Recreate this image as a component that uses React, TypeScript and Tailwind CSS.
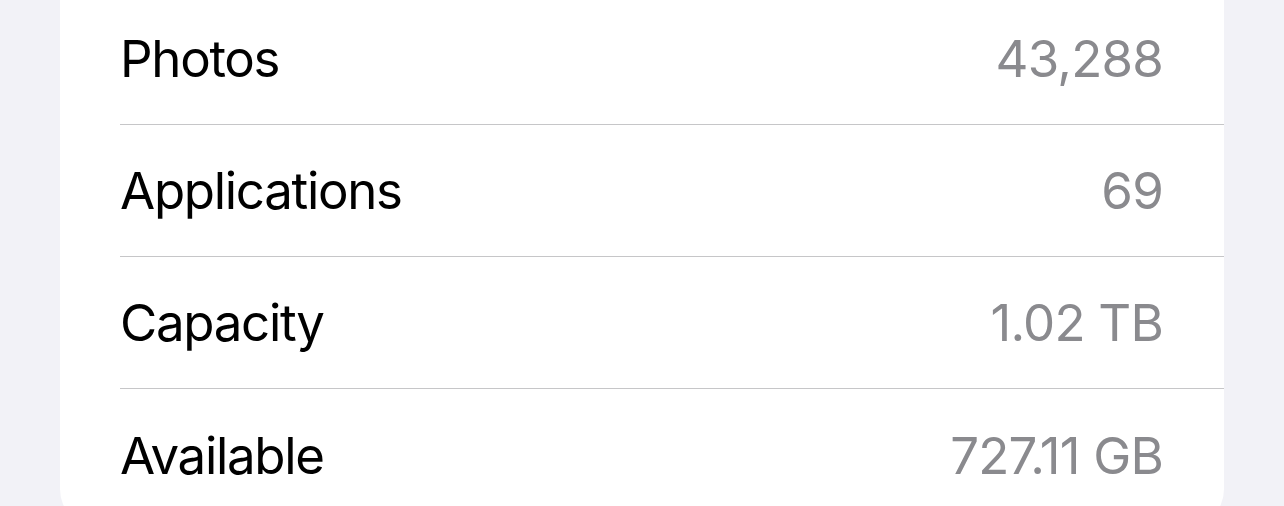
import React from 'react';

interface InfoRow {
  label: string;
  value: string;
}

const rows: InfoRow[] = [
  { label: 'Photos', value: '43,288' },
  { label: 'Applications', value: '69' },
  { label: 'Capacity', value: '1.02 TB' },
  { label: 'Available', value: '727.11 GB' },
];

export default function App() {
  return (
    <div
      className="h-[506px] w-[1284px] overflow-hidden bg-[#f2f2f7] px-[60px]"
      style={{ fontFamily: 'Inter, "Noto Sans", sans-serif' }}
    >
      <div className="-mt-[7px] rounded-b-[40px] bg-white pb-2 pl-[60px]">
        {rows.map((row, i) => (
          <div
            key={row.label}
            className={
              i < rows.length - 1
                ? 'flex h-[132px] items-center justify-between border-b border-[#c6c6c8] pr-[61px]'
                : 'flex h-[132px] items-center justify-between pr-[61px]'
            }
          >
            <span className="text-[51px] leading-none tracking-[-1.3px] text-black">{row.label}</span>
            <span className="text-[51px] leading-none tracking-[-0.8px] text-[#8a8a8e]">{row.value}</span>
          </div>
        ))}
      </div>
    </div>
  );
}
